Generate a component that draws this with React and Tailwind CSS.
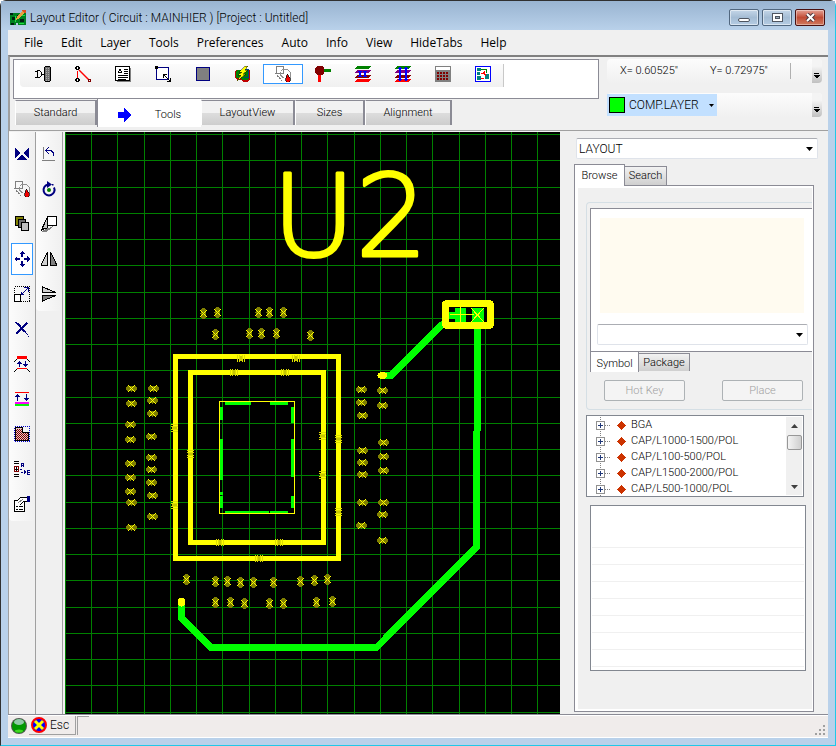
import { useState } from 'react';
import clsx from 'clsx';

/* ─── icons, all drawn on a 16px grid ─── */
const Icon = ({ children, size = 16 }) => (
  <svg
    width={size}
    height={size}
    viewBox="0 0 16 16"
    fill="none"
    shapeRendering="crispEdges"
    aria-hidden="true"
    className="shrink-0"
  >
    {children}
  </svg>
);

const NAVY = '#000080';

const icons = {
  gate: (
    <Icon>
      <path d="M0 5.5h2M0 11.5h2M6 8.5h3" stroke="#000" />
      <path d="M2.5 4.5v7h2l2-2v-3l-2-2z" stroke="#000" />
      <path d="M9.5 1.5l1-1h4l1 1v13l-1 1h-4l-1-1z" fill="#707070" stroke="#000" />
      <path d="M11.5 2v13M13.5 2v13" stroke="#aaa" strokeDasharray="1 1" />
    </Icon>
  ),
  net: (
    <Icon>
      <path d="M2.5 5v7" stroke="#f00" />
      <path d="M4 4l10 10" stroke="#f00" strokeWidth="1.4" shapeRendering="auto" />
      <path d="M1.500.500h2v3h-2zM1.500 12.500h2v3h-2z" fill="#fff" stroke="#000" />
      <path d="M.5 1v2M4.500 1v2M.5 13v2M4.500 13v2" stroke="#000" />
      <path d="M13.500 13.500h2v2h-2z" stroke="#800000" />
    </Icon>
  ),
  text: (
    <Icon>
      <path d="M2 15.5h14M15.5 2v14" stroke="#808080" />
      <path d="M.5.5h14v14h-14z" fill="#fff" stroke="#000" />
      <path d="M3 7l2-4 2 4M4 6h3M9 3.5h4M9 5.5h4M9 7.5h4M3 9.5h10M3 11.5h10M3 13.5h8" stroke="#000" />
    </Icon>
  ),
  resize: (
    <Icon>
      <path d="M1.500 1.500h12v12h-12z" fill="#fff" stroke={NAVY} />
      <path d="M0 0h3v3H0z" fill="#000" />
      <path d="M9 9l6 6M8.500 12V8.500H12M15.500 12v3.500H12" stroke="#000" />
    </Icon>
  ),
  block: (
    <Icon>
      <path d="M1.500 1.500h13v13h-13z" fill="#808080" stroke={NAVY} />
    </Icon>
  ),
  route: (
    <Icon>
      <path d="M1 4h14v9l-3 3H8l-2-2H2l-2-3V6z" fill="#c00000" />
      <path d="M2 4h12v8l-2 2H8l-3-2H1V7z" fill="#008000" />
      <path d="M8 3h5v8H9" stroke="#004080" />
      <path d="M10 0L4 6h3l-4 3h3l-4 6 9-7H8l5-4h-3l3-4z" fill="#ff0" stroke="#202000" strokeWidth=".5" />
    </Icon>
  ),
  paint: (
    <Icon>
      <path d="M1.500.500h7v7h-7z" stroke="#808080" />
      <path d="M5.500 5.500l2-2h5l3 3v5l-2 2M5.500 6v3l3 3" stroke="#909090" />
      <path d="M0 7l8 9" stroke="#808080" strokeDasharray="2 1" />
      <path d="M12.500 8l3 5-1 3h-3l-1-3z" fill="#e00" stroke="#000" strokeWidth=".7" />
    </Icon>
  ),
  pin: (
    <Icon>
      <path d="M8 4.500h8" stroke="#008000" strokeWidth="3" />
      <path d="M4.500 8v8" stroke="#f00" strokeWidth="3" />
      <path d="M2 0h5l2 2v5L7 9H2L0 7V2z" fill="#800000" />
    </Icon>
  ),
  stackA: (
    <Icon>
      <path d="M2 0h14l-2 3H0z" fill="#008000" />
      <path d="M2 4h14l-2 3H0z" fill="#800080" />
      <path d="M2 9h14l-2 3H0z" fill="#800000" />
      <path d="M2 13h14l-2 3H0z" fill="#f00" />
      <path d="M5 5v6M10 5v6" stroke="#00f" strokeWidth="2" />
      <path d="M3 5.500h4M8 5.500h4M3 10.500h4M8 10.500h4" stroke="#00f" />
    </Icon>
  ),
  stackB: (
    <Icon>
      <path d="M2 0h14l-2 3H0z" fill="#008000" />
      <path d="M2 4h14l-2 3H0z" fill="#800080" />
      <path d="M2 9h14l-2 3H0z" fill="#800000" />
      <path d="M2 13h14l-2 3H0z" fill="#f00" />
      <path d="M5 1v14M11 1v14" stroke="#00f" strokeWidth="2" />
      <path d="M3 2.500h4M9 2.500h4M3 13.500h4M9 13.500h4" stroke="#00f" />
    </Icon>
  ),
  calc: (
    <Icon>
      <path d="M0 0h16v16H0z" fill="#808080" />
      <path d="M1 1h14v3H1z" fill="#fff" />
      <path d="M2 7h12M2 10h12M2 13h12" stroke="#800000" strokeWidth="2" strokeDasharray="2 1" />
    </Icon>
  ),
  scheme: (
    <Icon>
      <path d="M.5.5h15v15H.5z" fill="#fff" stroke="#00f" />
      <path d="M2 2h4v3H2zM2 6h3v3H2zM2 10h4v4H2zM10 8h4v5h-4z" fill="#008080" />
      <path d="M6 3.500h5.500V7" stroke="#008000" />
      <path d="M6 7.500h2M9 5v4M6 12.500h3M8 6l3 4" stroke="#f00" />
    </Icon>
  ),
  flipCorner: (
    <Icon>
      <path d="M1 2l6 5-6 5zM15 2L9 7l6 5zM8 8l5 6H3z" fill={NAVY} />
    </Icon>
  ),
  layers: (
    <Icon>
      <path d="M1.500.500h8v9h-8z" fill="#808000" stroke="#000" />
      <path d="M4.500 3.500h7v8h-7z" fill="#707070" stroke="#000" />
      <path d="M7.500 6.500h7v8h-7z" fill="#c0c0c0" stroke="#000" />
    </Icon>
  ),
  move: (
    <Icon>
      <path d="M8 0l3 3H9v3H7V3H5zM8 16l3-3H9v-3H7v3H5zM0 8l3-3v2h3v2H3v2zM16 8l-3-3v2h-3v2h3v2z" fill={NAVY} />
    </Icon>
  ),
  scale: (
    <Icon>
      <path d="M.5.5h15v15H.5z" stroke="#000" strokeDasharray="1 1" />
      <path d="M.5 8.500h6v7h-6z" fill="#fff" stroke="#000" />
      <path d="M8 8l6-6M10 1.500h4.500V6M7.500 6v2.500H10" stroke={NAVY} />
    </Icon>
  ),
  cut: (
    <Icon>
      <path d="M3 2l8 9M13 2L2 13" stroke={NAVY} strokeWidth="2" />
      <path d="M1 1h2M11 11l3 3M14 15h1" stroke={NAVY} />
    </Icon>
  ),
  swapPart: (
    <Icon>
      <path d="M3 0h10v3H3zM3 12h10v1H3z" fill="#f00" />
      <path d="M3 3L0 6M13 3l3 3M3 13l-3 3M13 13l3 3" stroke="#000" />
      <path d="M5.500 5v6M11.500 5v6" stroke={NAVY} />
      <path d="M3 8l2.500-3L8 8zM9 8l2.500 3L14 8z" fill={NAVY} />
    </Icon>
  ),
  swapLayer: (
    <Icon>
      <path d="M1 1h14v1H1z" fill="#f00" />
      <path d="M1 11h14v2H1z" fill="#f0f" />
      <path d="M1 13h14v2H1z" fill="#0f0" />
      <path d="M3.500 3v7M12.500 3v7" stroke={NAVY} />
      <path d="M1 6l2.500-3L6 6zM10 7l2.500 3L15 7z" fill={NAVY} />
    </Icon>
  ),
  area: (
    <Icon>
      <path d="M.5.5h15v15H.5z" stroke="#00c" strokeDasharray="1 1" />
      <path d="M1.500 1.500h7v5h6v8h-13z" fill="#e8c8c8" stroke="#000" />
      <path d="M3 3.500h5M3 5.500h5M3 7.500h11M3 9.500h11M3 11.500h11M3 13.500h11" stroke="#800000" strokeDasharray="1 1" />
      <path d="M2 4.500h6M2 6.500h6M2 8.500h12M2 10.500h12M2 12.500h12" stroke="#800000" strokeDasharray="1 1" />
    </Icon>
  ),
  rename: (
    <Icon>
      <path d="M0 .5h5M0 2.500h5M0 13.500h5M0 15.500h5" stroke="#000" />
      <path d="M.5 5.500h4v5h-4z" stroke="#800000" />
      <path d="M1 8h3M2.500 6v4" stroke="#000" />
      <path d="M7.500 6V3l1-1h1v4M8 4h2M13.500 9v5M14 9.500h2v4h-2M14 11.500h2" stroke={NAVY} />
      <path d="M6 8h2M7 11h4M10 9v4l2-2z" stroke={NAVY} strokeDasharray="2 1" />
    </Icon>
  ),
  props: (
    <Icon>
      <path d="M.5 4.500h10v11H.5z" fill="#fff" stroke="#000" />
      <path d="M2 10.500h2M5 10.500h4M2 13.500h2M5 13.500h4" stroke="#000" />
      <path d="M3 5l4-4h6v4l-4 1-3 3" fill="#fff" stroke="#000" />
      <path d="M4 7l5-4" stroke="#808080" />
      <path d="M13 0h3v6h-3z" fill={NAVY} />
    </Icon>
  ),
  rotateStep: (
    <Icon>
      <path d="M2.500 1v12M1 14.500h13" stroke="#808080" />
      <path d="M5 4.500h5l2 2V10M8 1L5 4.500 8 8" stroke={NAVY} />
    </Icon>
  ),
  rotate: (
    <Icon>
      <g shapeRendering="auto">
        <path d="M7 3.500a5.500 5.500 0 106 3" stroke={NAVY} strokeWidth="2" />
        <path d="M6 0l5 3.500L6 7z" fill={NAVY} />
        <circle cx="8" cy="9" r="2" fill="#008000" />
        <path d="M11 3h1.500v1.500H11z" fill={NAVY} />
      </g>
    </Icon>
  ),
  perspective: (
    <Icon>
      <path d="M0 15l6-13v10H4z" fill="#c8c8c8" stroke="#000" />
      <path d="M1 15h5l6-5" fill="#808080" stroke="#808080" />
      <path d="M6.500.500h9v9h-9z" fill="#fff" stroke="#000" />
    </Icon>
  ),
  mirrorH: (
    <Icon>
      <path d="M6.500 1v13.500H0z" fill="#d0d0d0" stroke="#000" />
      <path d="M9.500 1v13.500H16z" fill="#808080" stroke="#000" />
    </Icon>
  ),
  mirrorV: (
    <Icon>
      <path d="M1.500 1v5.500H15z" fill="#d0d0d0" stroke="#000" />
      <path d="M1.500 15V9.500H15z" fill="#808080" stroke="#000" />
    </Icon>
  ),
};

const MENUS = ['File', 'Edit', 'Layer', 'Tools', 'Preferences', 'Auto', 'Info', 'View', 'HideTabs', 'Help'];

const TOOLBAR = ['gate', 'net', 'text', 'resize', 'block', 'route', 'paint', 'pin', 'stackA', 'stackB', 'calc', 'scheme'];

const EDIT_TOOLS = ['flipCorner', 'paint', 'layers', 'move', 'scale', 'cut', 'swapPart', 'swapLayer', 'area', 'rename', 'props'];

const TURN_TOOLS = ['rotateStep', 'rotate', 'perspective', 'mirrorH', 'mirrorV'];

const LIBRARY = ['BGA', 'CAP/L1000-1500/POL', 'CAP/L100-500/POL', 'CAP/L1500-2000/POL', 'CAP/L500-1000/POL'];

/* ─── board data, [x, y] ─── */
const UPRIGHT_PADS = [
  [203, 313], [217, 312], [258, 312], [269, 312], [283, 312],
  [215, 334], [249, 333], [261, 333], [276, 333], [310, 335],
  [186, 579], [215, 581], [227, 581], [240, 582], [253, 582], [273, 582], [300, 581], [314, 580], [327, 579],
  [215, 602], [230, 602], [244, 603], [269, 603], [283, 603], [316, 602], [332, 601],
];

const FLAT_PADS = [
  [131, 388], [153, 388], [131, 403], [152, 400], [152, 413], [130, 424], [130, 439], [151, 436],
  [130, 463], [151, 457], [151, 469], [130, 477], [151, 482], [130, 491], [152, 495], [131, 502],
  [152, 516], [131, 527],
  [361, 389], [361, 402], [362, 415], [382, 390], [382, 405], [362, 450], [362, 462], [362, 474],
  [383, 442], [383, 456], [383, 470], [362, 502], [383, 502], [382, 514], [361, 525], [382, 540],
];

const ROW_TICKS = [[241, 358], [296, 358], [234, 372], [285, 372], [220, 542], [279, 542], [259, 558]];
const COLUMN_TICKS = [[174, 428], [190, 454], [322, 436], [322, 475], [338, 439], [174, 505], [338, 512]];

const GRID = Array.from({ length: 80 }, (_, i) => i);

const Pad = ({ x, y, upright }) => (
  <g transform={`translate(${x}.5 ${y}.5)`}>
    <ellipse rx={upright ? 3 : 5.500} ry={upright ? 5.500 : 3} fill="#808000" />
    <path d="M-3.500-3.500l7 7M3.500-3.500l-7 7" stroke="#ff0" />
  </g>
);

const Board = () => (
  <svg
    className="min-w-0 flex-1 self-stretch overflow-hidden bg-black"
    shapeRendering="crispEdges"
    fill="none"
    role="img"
    aria-label="Board"
  >
    <g transform="translate(-65 -132)">
      {GRID.map((i) => (
        <path
          key={i}
          d={`M${Math.round(64.95 + 26.25 * i)}.5 132v2100M65 ${Math.round(134.1 + 26.25 * i)}.5h2100`}
          stroke="#008000"
        />
      ))}

      {/* reference designator */}
      <text
        x="272"
        y="256"
        fill="#ff0"
        stroke="#ff0"
        strokeWidth="3"
        strokeLinejoin="round"
        fontFamily="'DejaVu Sans', sans-serif"
        fontWeight="200"
        fontSize="114"
        textRendering="geometricPrecision"
      >
        U2
      </text>

      {UPRIGHT_PADS.map(([x, y]) => (
        <Pad key={`${x}-${y}`} x={x} y={y} upright />
      ))}
      {FLAT_PADS.map(([x, y]) => (
        <Pad key={`${x}-${y}`} x={x} y={y} />
      ))}

      {/* routed traces */}
      <path
        d="M477.500 326V431M476.500 431V547L376.500 647.500H211L181.500 618V602M382 375.500H391L445 322"
        stroke="#0f0"
        strokeWidth="7"
      />
      <ellipse cx="181.500" cy="602" rx="3.500" ry="4.500" fill="#ff0" />
      <ellipse cx="382.500" cy="375.500" rx="5" ry="3.500" fill="#ff0" />

      {/* chip outline */}
      <path d="M175.500 356.500h163v202h-163zM190.500 372.500h133v170h-133z" stroke="#ff0" strokeWidth="5" />
      {ROW_TICKS.map(([x, y]) => (
        <g key={x} transform={`translate(${x} ${y})`}>
          <path d="M-1-2h2v5h-2z" fill="#c8c800" />
          <path d="M-3.500-3v7M-1.500-3v7M1.500-3v7M3.500-3v7" stroke="#dd0" />
        </g>
      ))}
      {COLUMN_TICKS.map(([x, y]) => (
        <g key={`${x}-${y}`} transform={`translate(${x} ${y})`}>
          <path d="M-2-1h5v2h-5z" fill="#c8c800" />
          <path d="M-3-3.500h7M-3-1.500h7M-3 1.500h7M-3 3.500h7" stroke="#dd0" />
        </g>
      ))}
      <path
        d="M225 402h26v3h-26zM270 402h18v3h-18zM220 407h3v13h-3zM220 439h3v41h-3zM220 492h3v3h-3zM220 496h3v12h-3zM291 407h3v16h-3zM291 439h3v38h-3zM291 496h3v12h-3zM225 511h44v2h-44zM270 511h18v2h-18z"
        fill="#0f0"
      />
      <path d="M219.500 401.500h75v112h-75z" stroke="#ff0" />

      {/* two pin part */}
      <path d="M449 307h38v15h-38z" fill="#000" />
      <path d="M449 312h6v7h-6zM455 308h11v14h-11zM472 308h12v14h-12z" fill="#0f0" />
      <path d="M450 314.500h24M460.500 307v15M471 308l13 14M484 308l-13 14" stroke="#ff0" />
      <rect x="445.500" y="303.500" width="45" height="22" rx="1" stroke="#ff0" strokeWidth="7" />
    </g>
  </svg>
);

const ToolColumn = ({ tools, active, className }) => (
  <div className={clsx('flex flex-col border-r border-[#a0a0a0]', className)}>
    <div className="flex flex-col gap-[3px] rounded-b bg-gradient-to-r from-[#fcfcfc] to-[#f0f0f0] pt-[6px] pb-px">
      {tools.map((name) => (
        <button
          key={name}
          type="button"
          aria-label={name}
          className={clsx(
            'mx-auto flex h-8 w-[22px] items-center justify-center border',
            name === active ? 'border-[#3399ff] bg-white' : 'border-transparent'
          )}
        >
          {icons[name]}
        </button>
      ))}
    </div>
  </div>
);

const DropSelect = ({ label, options }) => (
  <div className="relative">
    <select
      aria-label={label}
      className="block h-[21px] w-full appearance-none rounded-xs border border-[#dfe3ea] border-t-[#abadb3] bg-white px-0.5 text-xs leading-4 text-black"
    >
      {options.map((option) => (
        <option key={option}>{option}</option>
      ))}
    </select>
    <svg width="7" height="4" className="pointer-events-none absolute top-[9px] right-[5px]" aria-hidden="true">
      <path d="M0 0h7L3.500 4z" />
    </svg>
  </div>
);

const Overflow = ({ label }) => (
  <button
    type="button"
    aria-label={label}
    className="flex w-[10px] items-end justify-center self-stretch rounded-r bg-gradient-to-b from-[#f4f4f4] from-30% to-[#c0c0c0] pb-1"
  >
    <svg width="6" height="6" shapeRendering="crispEdges" aria-hidden="true">
      <path d="M0 0h5v1H0zM0 2h6L3 6z" />
    </svg>
  </button>
);

const TitleBar = () => (
  <header className="flex h-[29px] items-center bg-gradient-to-b from-[#99b4d1] to-[#b9d1ea] pt-1 pr-[10px] pl-[9px]">
    <svg width="16" height="16" viewBox="0 0 16 16" shapeRendering="crispEdges" aria-hidden="true">
      <path d="M0 3h16v12H8v-2H6v2H0z" fill="#008020" />
      <path d="M0 3h3v2H0zM2 7h3v3H2zM10 9h4v3h-4zM7 5h2v3H7zM1 13h3v2H1z" fill="#002010" />
      <path d="M5 6h1v6H5zM11 5h4v1h-4zM9 13h5v1H9z" fill="#20e040" />
      <path d="M6 10l1-4 6-6 3 1-6 7z" fill="#e8a040" />
      <path d="M12 0h4v3h-2z" fill="#e05020" />
    </svg>
    <h1 className="ml-1 flex-1 text-xs leading-4 whitespace-nowrap text-black">
      Layout Editor ( Circuit : MAINHIER ) [Project : Untitled]
    </h1>
    <div className="flex gap-[3px]">
      <button
        type="button"
        aria-label="Minimize"
        className="flex h-[17px] w-[30px] items-center justify-center rounded-xs border border-[#51677f] bg-gradient-to-b from-[#c5d6e8] via-[#a4bcd4] to-[#b5cce3] shadow-[inset_0_0_0_1px_#ffffff80]"
      >
        <span className="mt-1 h-1 w-3 rounded-xs border border-[#4f5560] bg-white" />
      </button>
      <button
        type="button"
        aria-label="Maximize"
        className="flex h-[17px] w-[30px] items-center justify-center rounded-xs border border-[#51677f] bg-gradient-to-b from-[#c5d6e8] via-[#a4bcd4] to-[#b5cce3] shadow-[inset_0_0_0_1px_#ffffff80]"
      >
        <svg width="11" height="9" shapeRendering="crispEdges" aria-hidden="true">
          <path d="M.5.5h10v8H.5z" fill="#fff" stroke="#4f5560" />
          <path d="M3.500 3.500h4v2h-4z" fill="#9ab" stroke="#4f5560" />
        </svg>
      </button>
      <button
        type="button"
        aria-label="Close"
        className="flex h-[17px] w-[30px] items-center justify-center rounded-xs border border-[#4a1010] bg-gradient-to-b from-[#e3a095] via-[#c04a35] to-[#d07a60] shadow-[inset_0_0_0_1px_#ffffff60]"
      >
        <svg width="11" height="9" aria-hidden="true">
          <path d="M2 1l7 7M9 1L2 8" stroke="#503840" strokeWidth="4" />
          <path d="M2 1l7 7M9 1L2 8" stroke="#fff" strokeWidth="2" />
        </svg>
      </button>
    </div>
  </header>
);

const Ribbon = () => (
  <section className="flex h-[75px] border-t-2 border-l-2 border-t-[#808080] border-l-[#a0a0a0] bg-[#f0f0f0] pt-[2px] pl-[3px]">
    <div className="min-w-0 flex-1">
      <div className="h-10 border border-[#8b8b95] bg-white pt-1 pl-[6px]">
        <div className="flex h-[23px] w-[484px] max-w-full rounded-l border-r border-[#c8c8c8] bg-gradient-to-b from-[#fcfcfc] to-[#f0f0f0] pl-[3px]">
          {TOOLBAR.map((name) => (
            <button
              key={name}
              type="button"
              aria-label={name}
              className={clsx(
                'flex h-5 w-10 items-center justify-center border',
                name === 'paint' ? 'border-[#3399ff] bg-white' : 'border-transparent'
              )}
            >
              {icons[name]}
            </button>
          ))}
        </div>
      </div>
      <div role="tablist" className="ml-0.5 flex items-start text-[11px] leading-4">
        {['Standard', 'Tools', 'LayoutView', 'Sizes', 'Alignment'].map((name) => (
          <button
            key={name}
            type="button"
            role="tab"
            aria-selected={name === 'Tools'}
            className={clsx(
              'flex items-center justify-center',
              name === 'Tools'
                ? 'h-7 w-[104px] gap-6 border-l border-[#8b8b95] bg-white pt-1'
                : 'mt-px h-[25px] border-t border-r-2 border-l border-[#8b8b95] border-l-white bg-gradient-to-b from-[#f2f2f2] from-50% via-[#dddddd] via-50% to-[#cdcdcd]',
              name === 'Standard' && 'w-[82px]',
              name === 'LayoutView' && 'w-[94px]',
              name === 'Sizes' && 'w-[70px]',
              name === 'Alignment' && 'w-[87px]'
            )}
          >
            {name === 'Tools' && (
              <svg width="13" height="14" shapeRendering="crispEdges" aria-hidden="true">
                <path d="M0 4h6V0l7 7-7 7v-4H0z" fill="#00f" />
              </svg>
            )}
            {name}
          </button>
        ))}
      </div>
    </div>

    <div className="mr-[6px] ml-2 w-[215px] shrink-0 text-xs leading-4">
      <div className="flex h-6 items-center rounded bg-gradient-to-b from-[#fcfcfc] to-[#f0f0f0]">
        <span className="ml-[13px] w-[90px] text-[11px]">X= 0.60525&quot;</span>
        <span className="w-20 text-[11px]">Y= 0.72975&quot;</span>
        <span className="mr-auto h-4 border-l border-[#b0b0b0]" />
        <Overflow label="More position options" />
      </div>
      <div className="mt-[10px] flex h-6 items-center rounded bg-gradient-to-b from-[#fcfcfc] to-[#f0f0f0]">
        <button type="button" className="mr-auto flex h-[22px] items-center bg-[#c2e0ff] pr-[3px] pl-0.5">
          <span className="mr-1 size-4 border border-t-black border-l-black bg-[#00ff00]" />
          COMP.LAYER
          <svg width="5" height="3" className="ml-[10px]" aria-hidden="true">
            <path d="M0 0h5L2.500 3z" />
          </svg>
        </button>
        <Overflow label="More layer options" />
      </div>
    </div>
  </section>
);

const PartPanel = () => (
  <aside className="flex w-[268px] shrink-0 flex-col bg-[#f0f0f0] pt-[6px] pr-[10px] pb-0.5 pl-[14px] text-xs leading-4">
    <div className="ml-0.5">
      <DropSelect label="Design" options={['LAYOUT']} />
    </div>

    <div role="tablist" className="mt-[5px] -mb-px flex items-end">
      <button
        type="button"
        role="tab"
        aria-selected="true"
        className="z-10 h-[22px] w-[51px] border border-b-0 border-[#8b8b95] bg-white text-[11px]"
      >
        Browse
      </button>
      <button
        type="button"
        role="tab"
        aria-selected="false"
        className="h-5 w-[42px] border border-l-0 border-[#8b8b95] bg-gradient-to-b from-[#f2f2f2] to-[#cfcfcf] text-[11px]"
      >
        Search
      </button>
    </div>

    <div className="mr-1 flex-1 border border-[#8b8b95] bg-white py-0.5 pr-px pl-[3px]">
      <div className="h-full bg-[#f0f0f0] pt-[14px] pl-2">
        <div className="h-[208px] rounded-l border border-r-0 border-[#d5dfe5] pt-[5px] pl-[3px]">
          <div className="h-[144px] border border-r-0 border-[#8b8b95] bg-white pt-[9px] pr-1 pl-[6px]">
            <div className="mr-1 ml-[3px] h-[95px] bg-[#fffbf0]" />
            <div className="mt-[11px]">
              <DropSelect label="Part" options={['']} />
            </div>
          </div>
          <div role="tablist" className="flex items-start text-[11px]">
            <button
              type="button"
              role="tab"
              aria-selected="true"
              className="h-5 w-[49px] border-r border-l border-[#8b8b95] bg-white pt-1"
            >
              Symbol
            </button>
            <button
              type="button"
              role="tab"
              aria-selected="false"
              className="mt-px h-[18px] w-[51px] border-t border-r border-[#8b8b95] bg-gradient-to-b from-[#f2f2f2] to-[#cfcfcf]"
            >
              Package
            </button>
          </div>
          <div className="mt-2 mr-[9px] ml-[14px] flex justify-between">
            <button
              type="button"
              disabled
              className="h-[21px] w-[81px] rounded-xs border border-[#adb2b5] bg-[#f4f4f4] text-[11px] text-[#a0a0a0]"
            >
              Hot Key
            </button>
            <button
              type="button"
              disabled
              className="h-[21px] w-[81px] rounded-xs border border-[#adb2b5] bg-[#f4f4f4] text-[11px] text-[#a0a0a0]"
            >
              Place
            </button>
          </div>
        </div>

        <div className="mt-[5px] mr-2 flex h-[82px] overflow-hidden border border-[#828790] bg-white p-px">
          <ul className="flex-1 pl-[7px] text-[11px]">
            {LIBRARY.map((part) => (
              <li key={part} className="flex h-4 items-center whitespace-nowrap">
                <svg width="16" height="16" shapeRendering="crispEdges" aria-hidden="true">
                  <path d="M5.500 0v16M10 8.500h6" stroke="#808080" strokeDasharray="1 1" />
                  <path d="M1.500 4.500h8v8h-8z" fill="#fff" stroke="#919191" />
                  <path d="M3 8.500h5M5.500 6v5" stroke="#203878" />
                </svg>
                <svg width="9" height="9" className="mr-[5px] ml-[6px]" shapeRendering="crispEdges" aria-hidden="true">
                  <path d="M4.500 0L9 4.500 4.500 9 0 4.500z" fill="#cc3300" />
                </svg>
                {part}
              </li>
            ))}
          </ul>
          <div className="flex w-4 flex-col items-center bg-[#f0f0f0]">
            <button type="button" aria-label="Scroll up" className="flex h-[18px] w-4 items-center justify-center">
              <svg width="7" height="4" aria-hidden="true">
                <path d="M0 4h7L3.500 0z" fill="#404040" />
              </svg>
            </button>
            <span className="h-[15px] w-[15px] rounded-xs border border-[#979797] bg-gradient-to-r from-[#f4f4f4] to-[#cfcfcf]" />
            <button type="button" aria-label="Scroll down" className="mt-auto flex h-4 w-4 items-center justify-center">
              <svg width="7" height="4" aria-hidden="true">
                <path d="M0 0h7L3.500 4z" fill="#404040" />
              </svg>
            </button>
          </div>
        </div>

        <div className="mt-2 mr-[6px] ml-1 h-[166px] border border-[#828790] bg-white px-px pt-[25px]">
          {LIBRARY.concat('', ' ', '  ').map((row) => (
            <div key={row} className="h-[17px] border-b border-[#f0f0f0]" />
          ))}
        </div>
      </div>
    </div>
  </aside>
);

const StatusBar = () => (
  <footer className="flex h-6 items-start border-t border-[#8b8b95] bg-[#f0eceb] pt-px pl-0.5 shadow-[inset_0_1px_0_#fff,inset_0_-1px_0_#fff]">
    <svg width="18" height="18" viewBox="0 0 18 18" className="mt-px" aria-hidden="true">
      <circle cx="9" cy="9" r="8" fill="#505850" />
      <circle cx="9" cy="9" r="7" fill="#009800" />
      <ellipse cx="9" cy="5" rx="5" ry="3" fill="#90c8a8" />
      <ellipse cx="9" cy="14" rx="4" ry="1.500" fill="#40d820" />
    </svg>
    <button
      type="button"
      className="ml-px flex h-[19px] w-[47px] items-center border-r border-b border-[#a0a0a0] pl-0.5 text-xs leading-4"
    >
      <svg width="16" height="16" viewBox="0 0 16 16" className="mr-[3px]" aria-hidden="true">
        <circle cx="8" cy="8" r="7" fill="#00f" stroke="#f00" strokeWidth="2" />
        <path d="M4 4l8 8M12 4l-8 8" stroke="#ff0" strokeWidth="3" />
      </svg>
      Esc
    </button>
    <span className="ml-px h-[19px] w-3 border-t border-l border-[#a0a0a0]" />
    <svg width="11" height="11" className="mt-[9px] mr-0.5 ml-auto" aria-hidden="true">
      <path d="M8 0h2v2H8zM4 4h2v2H4zM8 4h2v2H8zM0 8h2v2H0zM4 8h2v2H4zM8 8h2v2H8z" fill="#a0a0a0" />
    </svg>
  </footer>
);

const App = () => {
  const [openMenu, setOpenMenu] = useState(null);

  return (
    <div className="flex min-h-screen flex-col rounded-t-md border border-t-[#303030] border-r-[#20c8e8] border-b-[#20c8e8] border-l-[#303030] bg-[#b9d1ea] font-['Roboto',sans-serif] font-light text-black">
      <TitleBar />
      <div className="mx-[7px] mb-[7px] flex flex-1 flex-col">
        <nav className="flex h-[25px] items-center gap-[18px] bg-[#f0f0f0] pl-4 font-['Open_Sans',sans-serif] text-xs leading-4 font-normal">
          {MENUS.map((name) => (
            <button
              key={name}
              type="button"
              aria-expanded={openMenu === name}
              onClick={() => setOpenMenu(openMenu === name ? null : name)}
            >
              {name}
            </button>
          ))}
        </nav>

        <Ribbon />

        <main className="flex flex-1 border-t border-l border-[#a0a0a0] bg-[#f0f0f0] pt-px">
          <ToolColumn tools={EDIT_TOOLS} active="move" className="w-[27px]" />
          <ToolColumn tools={TURN_TOOLS} className="mr-0.5 w-[27px]" />
          <Board />
          <PartPanel />
        </main>

        <StatusBar />
      </div>
    </div>
  );
};

export default App;
